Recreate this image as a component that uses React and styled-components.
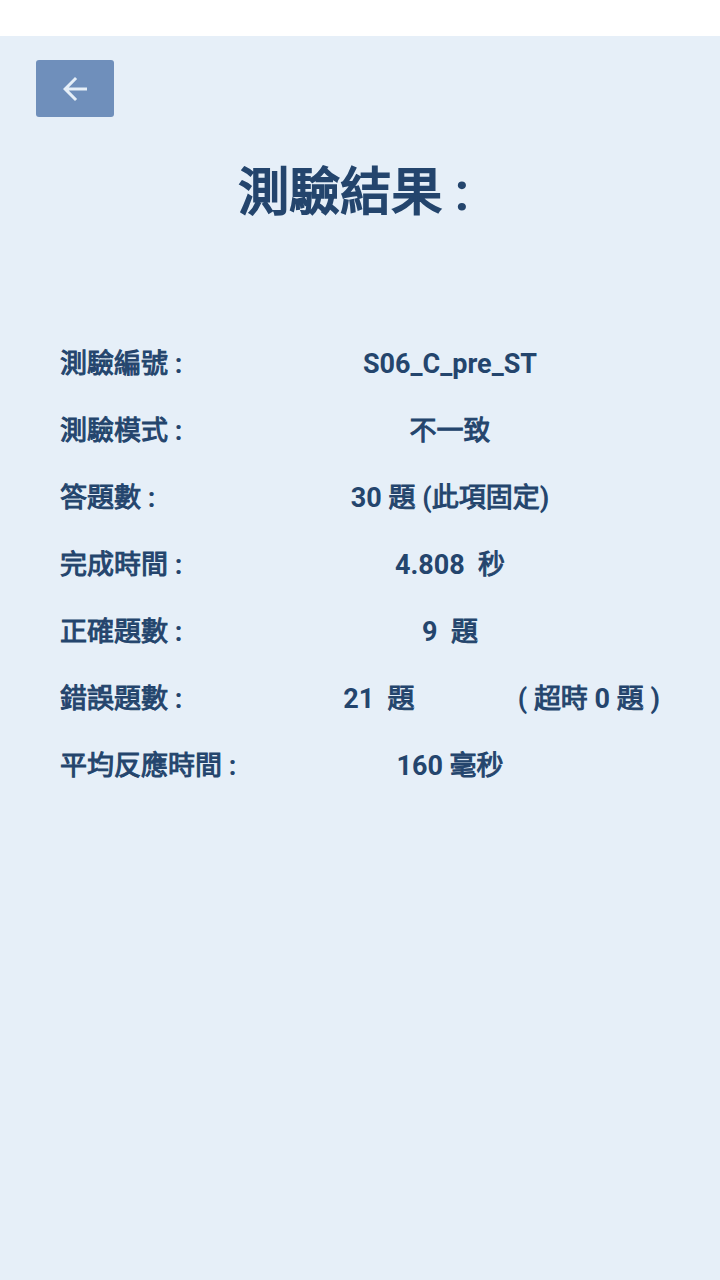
import React from "react";
import styled, { createGlobalStyle } from "styled-components";

const GlobalStyle = createGlobalStyle`
  *, *::before, *::after { box-sizing: border-box; }
  body {
    margin: 0;
    background: #e6eff8;
    color: #24456d;
    font-family: Roboto, "Noto Sans CJK TC", sans-serif;
    font-weight: 700;
  }
`;

const Page = styled.div`
  min-height: 100vh;
  background: #e6eff8;
`;

const StatusBar = styled.div`
  height: 36px;
  background: #ffffff;
`;

const Content = styled.main`
  padding: 24px 36px;
`;

const BackButton = styled.button`
  display: flex;
  align-items: center;
  justify-content: center;
  width: 78px;
  height: 57px;
  padding: 0;
  border: 0;
  border-radius: 3px;
  background: #6f8fbb;
  color: #e6eff8;
  cursor: pointer;
`;

const Title = styled.h1`
  margin: 38px 0 113px;
  font-size: 51px;
  line-height: 76px;
  text-align: center;
  white-space: pre;
`;

const Results = styled.dl`
  display: flex;
  flex-direction: column;
  gap: 27px;
  margin: 0;
  padding: 0 24px;
`;

const Row = styled.div`
  display: flex;
  font-size: 27px;
  line-height: 40px;
  white-space: pre;
`;

const Label = styled.dt`
  flex: 0 0 30%;
`;

const Value = styled.dd`
  flex: 1;
  margin: 0;
  text-align: center;
`;

const Note = styled.dd`
  margin: 0;
`;

/* Chinese runs use the regular face, thickened with an outline. */
const Han = styled.span`
  font-weight: 400;
  -webkit-text-stroke: ${({ $stroke }) => $stroke}px currentColor;
`;

function BoldText({ text, stroke = 1 }) {
  return text
    .split(/([\u4e00-\u9fff]+)/)
    .filter(Boolean)
    .map((run, i) =>
      /[\u4e00-\u9fff]/.test(run) ? (
        <Han key={i} $stroke={stroke}>{run}</Han>
      ) : (
        <React.Fragment key={i}>{run}</React.Fragment>
      )
    );
}

const results = [
  { label: "測驗編號 :", value: "S06_C_pre_ST" },
  { label: "測驗模式 :", value: "不一致" },
  { label: "答題數 :", value: "30 題 (此項固定)" },
  { label: "完成時間 :", value: "4.808  秒" },
  { label: "正確題數 :", value: "9  題" },
  { label: "錯誤題數 :", value: "21  題", note: "( 超時 0 題 )" },
  { label: "平均反應時間 :", value: "160 毫秒" },
];

export default function App() {
  return (
    <Page lang="zh-Hant">
      <GlobalStyle />
      <StatusBar />
      <Content>
        <BackButton type="button" aria-label="返回">
          <svg width="36" height="36" viewBox="0 0 24 24" fill="currentColor" aria-hidden="true">
            <path d="M20 11H7.83l5.59-5.59L12 4l-8 8 8 8 1.41-1.41L7.83 13H20v-2z" />
          </svg>
        </BackButton>
        <Title><BoldText text="測驗結果 : " stroke={2} /></Title>
        <Results>
          {results.map(({ label, value, note }) => (
            <Row key={label}>
              <Label><BoldText text={label} /></Label>
              <Value><BoldText text={value} /></Value>
              {note && <Note><BoldText text={note} /></Note>}
            </Row>
          ))}
        </Results>
      </Content>
    </Page>
  );
}
